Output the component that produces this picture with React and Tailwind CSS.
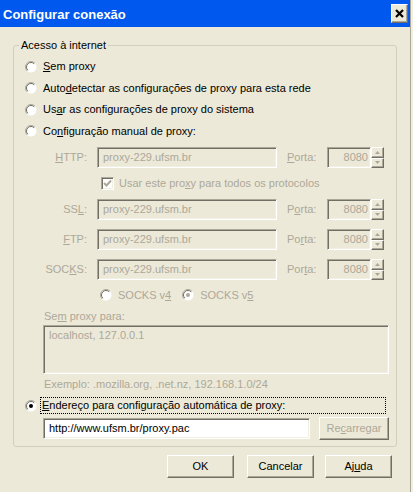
import React from "react";

const font = { fontFamily: '"Liberation Sans", Arial, sans-serif' };
const sunken =
  "border border-t-[#ACA899] border-l-[#ACA899] border-b-white border-r-white shadow-[inset_1px_1px_0_#716F64,inset_-1px_-1px_0_#F1EFE2]";
const raised =
  "border border-t-white border-l-white border-b-[#716F64] border-r-[#716F64] shadow-[inset_-1px_-1px_0_#ACA899]";

function Radio({ checked, disabled }) {
  return (
    <svg width="12" height="12" viewBox="0 0 12 12" className="shrink-0">
      <circle cx="6" cy="6" r="5.5" fill="#ffffff" />
      <path d="M9.9 2.1 A5.5 5.5 0 0 0 2.1 9.9" fill="none" stroke="#ACA899" strokeWidth="1" />
      <path d="M9.2 2.8 A4.5 4.5 0 0 0 2.8 9.2" fill="none" stroke="#716F64" strokeWidth="1" />
      {checked && <circle cx="6" cy="6" r="2" fill={disabled ? "#ACA899" : "#000000"} />}
    </svg>
  );
}

function Check() {
  return (
    <div className={`w-[13px] h-[13px] bg-white shrink-0 flex items-center justify-center ${sunken}`}>
      <svg width="9" height="9" viewBox="0 0 9 9">
        <path d="M1 4 L3.5 6.5 L8 1.5" fill="none" stroke="#ACA899" strokeWidth="2" />
      </svg>
    </div>
  );
}

function Spinner() {
  const half = `flex-1 bg-[#ECE9D8] flex items-center justify-center ${raised}`;
  return (
    <div className="w-[13px] h-[21px] flex flex-col">
      <div className={half}>
        <svg width="5" height="3" viewBox="0 0 5 3"><path d="M0 3 L2.5 0 L5 3Z" fill="#ACA899" /></svg>
      </div>
      <div className={half}>
        <svg width="5" height="3" viewBox="0 0 5 3"><path d="M0 0 L2.5 3 L5 0Z" fill="#ACA899" /></svg>
      </div>
    </div>
  );
}

function ProxyRow({ label, porta, className = "" }) {
  return (
    <div className={`flex items-center h-[21px] ${className}`}>
      <div className="w-[73px] text-right text-[#ACA899]">{label}</div>
      <div className={`ml-[10px] w-[180px] h-[21px] bg-[#ECE9D8] flex items-center pl-[5px] text-[#ACA899] ${sunken}`}>
        proxy-229.ufsm.br
      </div>
      <div className="ml-[10px] w-[40px] text-[#ACA899]">{porta}</div>
      <div className={`w-[44px] h-[21px] bg-[#ECE9D8] flex items-center justify-end pr-[2px] text-[#ACA899] ${sunken}`}>
        8080
      </div>
      <Spinner />
    </div>
  );
}

function Btn({ children, className = "", disabled }) {
  return (
    <div
      className={`h-[23px] bg-[#ECE9D8] flex items-center justify-center ${raised} ${
        disabled ? "text-[#ACA899]" : "text-black"
      } ${className}`}
    >
      {children}
    </div>
  );
}

export default function App() {
  return (
    <div className="w-[413px] h-[492px] bg-[#ECE9D8] flex text-[11px] leading-[13px] text-black" style={font}>
      <div className="w-[410px] flex flex-col">
        <div className="h-[27px] bg-[#0058EE] flex items-center justify-between pl-[3px] pr-[2px]">
          <span className="text-white font-bold text-[13px] mt-[2px]">Configurar conexão</span>
          <div className={`w-[17px] h-[19px] bg-[#ECE9D8] flex items-center justify-center ${raised}`}>
            <svg width="9" height="9" viewBox="0 0 9 9">
              <path d="M1 1 L8 8 M8 1 L1 8" stroke="#000" strokeWidth="2.2" />
            </svg>
          </div>
        </div>

        <fieldset className="mt-[11px] ml-[13px] w-[384px] border border-[#D0D0BF] rounded-[3px] pb-[7px]">
          <legend className="ml-[5px] px-[2px] h-[14px] leading-[14px]">Acesso à internet</legend>
          <div className="flex flex-col pt-[4px]">
            <div className="h-[21px] flex items-center pl-[11px] gap-[6px]">
              <Radio />
              <span><u>S</u>em proxy</span>
            </div>
            <div className="h-[22px] flex items-center pl-[11px] gap-[6px]">
              <Radio />
              <span>Auto<u>d</u>etectar as configurações de proxy para esta rede</span>
            </div>
            <div className="h-[21px] flex items-center pl-[11px] gap-[6px]">
              <Radio />
              <span>Us<u>a</u>r as configurações de proxy do sistema</span>
            </div>
            <div className="h-[22px] flex items-center pl-[11px] gap-[6px]">
              <Radio />
              <span>Co<u>n</u>figuração manual de proxy:</span>
            </div>

            <ProxyRow className="mt-[5px]" label={<><u>H</u>TTP:</>} porta={<><u>P</u>orta:</>} />
            <div className="mt-[6px] h-[18px] flex items-center pl-[87px] gap-[5px]">
              <Check />
              <span className="text-[#ACA899]">Usar este pro<u>x</u>y para todos os protocolos</span>
            </div>
            <ProxyRow className="mt-[7px]" label={<>SS<u>L</u>:</>} porta={<>P<u>o</u>rta:</>} />
            <ProxyRow className="mt-[9px]" label={<><u>F</u>TP:</>} porta={<>Po<u>r</u>ta:</>} />
            <ProxyRow className="mt-[9px]" label={<>SOC<u>K</u>S:</>} porta={<>Por<u>t</u>a:</>} />

            <div className="mt-[7px] h-[16px] flex items-center pl-[86px] text-[#ACA899]">
              <Radio disabled />
              <span className="ml-[6px]">SOCKS v<u>4</u></span>
              <span className="ml-[11px]"><Radio checked disabled /></span>
              <span className="ml-[6px]">SOCKS v<u>5</u></span>
            </div>

            <div className="mt-[7px] h-[13px] pl-[30px] text-[#ACA899]">
              Se<u>m</u> proxy para:
            </div>
            <div className={`mt-[2px] ml-[29px] w-[346px] h-[49px] bg-[#ECE9D8] pl-[5px] pt-[3px] text-[#ACA899] ${sunken}`}>
              localhost, 127.0.0.1
            </div>
            <div className="mt-[4px] h-[13px] pl-[30px] text-[#ACA899]">
              Exemplo: .mozilla.org, .net.nz, 192.168.1.0/24
            </div>

            <div className="mt-[6px] h-[17px] flex items-center pl-[11px]">
              <Radio checked />
              <div className="ml-[3px] w-[346px] h-[17px] border border-dotted border-black flex items-center pl-[1px]">
                <span><u>E</u>ndereço para configuração automática de proxy:</span>
              </div>
            </div>

            <div className="mt-[4px] h-[21px] flex items-center pl-[29px]">
              <div className={`w-[267px] h-[21px] bg-white flex items-center pl-[5px] ${sunken}`}>
                http://www.ufsm.br/proxy.pac
              </div>
              <Btn disabled className="ml-[9px] w-[70px] h-[21px]">
                <span>Re<u>c</u>arregar</span>
              </Btn>
            </div>
          </div>
        </fieldset>

        <div className="mt-[8px] flex pl-[167px]">
          <Btn className="w-[67px]">OK</Btn>
          <Btn className="ml-[13px] w-[67px]">Cancelar</Btn>
          <Btn className="ml-[11px] w-[67px]">
            <span>Aj<u>u</u>da</span>
          </Btn>
        </div>
      </div>
      <div className="w-[1px] bg-[#ACA899]" />
      <div className="w-[2px] bg-[#F1EFE2]" />
    </div>
  );
}
